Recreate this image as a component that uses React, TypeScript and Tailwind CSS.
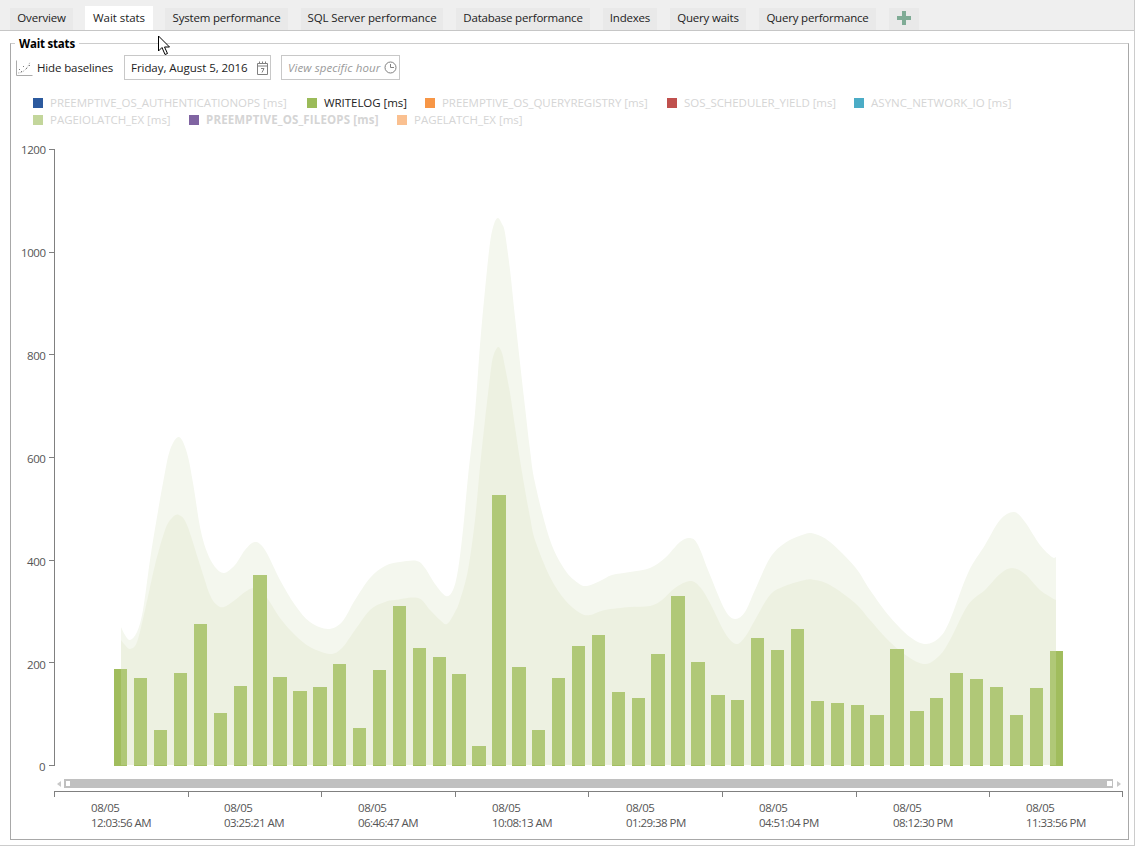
import React from "react";

type P = [number, number];

const outer: P[] = [[121,627],[125,635],[130,640],[137,632],[143,610],[150,560],[157,517],[163,483],[170,450],[179,437],[187,453],[193,483],[200,527],[207,552],[215,567],[224,573],[235,565],[245,550],[255,542],[265,550],[280,580],[295,605],[310,622],[328,629],[342,622],[355,600],[370,578],[385,566],[400,562],[417,561],[425,568],[435,584],[446,596],[453,590],[458,570],[463,530],[468,477],[475,413],[480,345],[485,290],[490,243],[494,224],[498,218],[502,224],[505,233],[510,270],[515,317],[520,363],[525,407],[530,450],[535,483],[550,540],[565,570],[578,583],[587,586],[600,581],[612,575],[630,572],[650,568],[665,558],[680,542],[690,538],[698,545],[710,575],[725,610],[735,619],[745,612],[755,590],[770,558],[785,543],[805,534],[815,534],[830,542],[855,567],[870,590],[890,617],[910,637],[926,644],[940,637],[950,620],[968,573],[985,545],[1000,520],[1014,512],[1025,522],[1040,545],[1052,557],[1056,557]];
const inner: P[] = [[121,640],[125,645],[130,649],[137,642],[145,610],[155,565],[165,530],[172,518],[179,515],[187,525],[200,565],[210,595],[217,605],[224,607],[235,600],[245,592],[254,588],[265,595],[280,618],[295,635],[310,647],[330,654],[342,648],[355,630],[370,610],[385,602],[395,600],[418,598],[430,610],[440,620],[447,624],[455,612],[460,600],[468,570],[475,520],[480,467],[485,420],[490,377],[493,357],[498,347],[502,353],[505,367],[510,393],[515,427],[520,460],[525,490],[530,517],[535,540],[550,577],[565,600],[580,613],[590,615],[605,610],[630,607],[650,606],[662,600],[675,588],[690,581],[700,587],[710,603],[725,633],[736,644],[745,637],[755,620],[770,595],[785,586],[805,580],[815,580],[830,585],[855,603],[870,620],[890,642],[910,658],[926,664],[940,655],[950,640],[968,605],[985,590],[1000,574],[1012,568],[1025,574],[1040,590],[1052,598],[1056,600]];

function areaPath(pts: P[]): string {
  let d = `M${pts[0][0]} 765 L${pts[0][0]} ${pts[0][1]}`;
  for (let i = 0; i < pts.length - 1; i++) {
    const p0 = pts[Math.max(0, i - 1)];
    const p1 = pts[i];
    const p2 = pts[i + 1];
    const p3 = pts[Math.min(pts.length - 1, i + 2)];
    const c1x = p1[0] + (p2[0] - p0[0]) / 6;
    const c1y = p1[1] + (p2[1] - p0[1]) / 6;
    const c2x = p2[0] - (p3[0] - p1[0]) / 6;
    const c2y = p2[1] - (p3[1] - p1[1]) / 6;
    d += ` C${c1x.toFixed(1)} ${c1y.toFixed(1)} ${c2x.toFixed(1)} ${c2y.toFixed(1)} ${p2[0]} ${p2[1]}`;
  }
  return d + ` L${pts[pts.length - 1][0]} 765 Z`;
}

const bars: [number, number, number][] = [
  [114,13,669],[134,13,678],[154,13,730],[174,13,673],[194,13,624],[214,13,713],[234,13,686],[253,14,575],[273,14,677],[293,14,691],[313,14,687],[333,13,664],[353,13,728],[373,13,670],[393,13,606],[413,13,648],[433,13,657],[452,14,674],[472,14,746],[492,14,495],[512,14,667],[532,13,730],[552,13,678],[572,13,646],[592,13,635],[612,13,692],[632,13,698],[651,14,654],[671,14,596],[691,14,662],[711,14,695],[731,13,700],[751,13,638],[771,13,650],[791,13,629],[811,13,701],[831,13,703],[851,13,705],[870,14,715],[890,14,649],[910,14,711],[930,13,698],[950,13,673],[970,13,679],[990,13,687],[1010,13,715],[1030,13,688],[1050,13,651],
];

const yAxis: [string, number, number, number][] = [
  ["1200",21,154,149],["1000",21,257,252],["800",27,360,354],["600",27,463,457],["400",27,566,560],["200",27,669,662],["0",39,771,765],
];
const xTicks = [54,188,321,455,588,722,856,989,1122];
const xLabels: [number, string][] = [[91,"12:03:56 AM"],[224,"03:25:21 AM"],[358,"06:46:47 AM"],[492,"10:08:13 AM"],[626,"01:29:38 PM"],[759,"04:51:04 PM"],[893,"08:12:30 PM"],[1026,"11:33:56 PM"]];

const tabs: { label: string; cls: string }[] = [
  { label: "Overview", cls: "w-[63px] ml-[10px] tracking-[-0.2px]" },
  { label: "System performance", cls: "w-[123px] ml-[12px] tracking-[-0.2px]" },
  { label: "SQL Server performance", cls: "w-[142px] ml-[13px] tracking-[-0.1px]" },
  { label: "Database performance", cls: "w-[134px] ml-[13px] tracking-[-0.2px]" },
  { label: "Indexes", cls: "w-[54px] ml-[13px] tracking-[-0.2px]" },
  { label: "Query waits", cls: "w-[76px] ml-[13px] tracking-[-0.2px]" },
  { label: "Query performance", cls: "w-[117px] ml-[13px] tracking-[-0.2px]" },
];

const legendRow1: { label: string; swatch: string; text: string; w: string }[] = [
  { label: "PREEMPTIVE_OS_AUTHENTICATIONOPS [ms]", swatch: "bg-[#2c5a9e]", text: "text-[#d5d5d5] tracking-[-0.03px]", w: "w-[274px]" },
  { label: "WRITELOG [ms]", swatch: "bg-[#9bbb59]", text: "text-[#222222] tracking-[-0.05px]", w: "w-[118px]" },
  { label: "PREEMPTIVE_OS_QUERYREGISTRY [ms]", swatch: "bg-[#f79646]", text: "text-[#d5d5d5] tracking-[-0.05px]", w: "w-[242px]" },
  { label: "SOS_SCHEDULER_YIELD [ms]", swatch: "bg-[#c0504d]", text: "text-[#d5d5d5] tracking-[-0.05px]", w: "w-[187px]" },
  { label: "ASYNC_NETWORK_IO [ms]", swatch: "bg-[#4bacc6]", text: "text-[#d5d5d5] tracking-[0.03px]", w: "w-[170px]" },
];
const legendRow2: { label: string; swatch: string; text: string; w: string }[] = [
  { label: "PAGEIOLATCH_EX [ms]", swatch: "bg-[#c3d69b]", text: "text-[#d5d5d5] tracking-[-0.03px]", w: "w-[156px]" },
  { label: "PREEMPTIVE_OS_FILEOPS [ms]", swatch: "bg-[#8064a2]", text: "text-[#d5d5d5] font-bold tracking-[0.16px]", w: "w-[208px]" },
  { label: "PAGELATCH_EX [ms]", swatch: "bg-[#fac090]", text: "text-[#d5d5d5] tracking-[-0.03px]", w: "w-[150px]" },
];

function LegendRow({ items }: { items: typeof legendRow1 }) {
  return (
    <div className="flex h-[17px] items-center">
      {items.map((it) => (
        <div key={it.label} className={`flex items-center gap-[7px] ${it.w}`}>
          <span className={`h-[10px] w-[10px] shrink-0 ${it.swatch}`} />
          <span className={`whitespace-nowrap text-[11.5px] ${it.text}`}>{it.label}</span>
        </div>
      ))}
    </div>
  );
}

export default function App() {
  return (
    <div className="relative h-[846px] w-[1135px] overflow-hidden border-r border-b border-[#cccccc] bg-white font-['Open_Sans',sans-serif] text-[11.5px] text-[#222222]">
      <div className="flex h-[31px] items-end border-b border-[#c6c6c6] bg-[#efefef]">
        {tabs.slice(0, 1).map((t) => (
          <div key={t.label} className={`flex h-[22px] items-center justify-center bg-[#e9e9e9] pb-[2px] whitespace-nowrap ${t.cls}`}>{t.label}</div>
        ))}
        <div className="ml-[12px] flex h-[24px] w-[68px] items-center justify-center bg-white pb-[1px] tracking-[-0.05px] whitespace-nowrap">Wait stats</div>
        {tabs.slice(1).map((t) => (
          <div key={t.label} className={`flex h-[22px] items-center justify-center bg-[#e9e9e9] pb-[2px] whitespace-nowrap ${t.cls}`}>{t.label}</div>
        ))}
        <div className="ml-[13px] flex h-[22px] w-[30px] items-center justify-center bg-[#e9e9e9] pb-[2px]">
          <svg width="14" height="14" viewBox="0 0 14 14">
            <path d="M5 0h4v5h5v4H9v5H5V9H0V5h5z" fill="#7fab95" />
          </svg>
        </div>
      </div>

      <div className="relative mx-[10px] mt-[12px] h-[797px] w-[1119px] border border-[#a8a8a8] border-t-[#cccccc] pt-[11px]">
        <div className="absolute top-[-9px] left-[4px] bg-white px-[4px] text-[11.5px] leading-[17px] font-bold tracking-[-0.2px] text-black">Wait stats</div>

        <div className="flex h-[25px] items-center pl-[5px]">
          <svg width="17" height="16" viewBox="0 0 17 16" fill="none">
            <path d="M0.5 0.5V15.5H16.5" stroke="#ababab" />
            <path d="M2 13C6 13 11 10 14 2" stroke="#b8b8b8" strokeDasharray="1.5 1" />
            <path d="M3 9.5h1M7 6.5h1M5 11.5h1M10 8.5h1M13 5.5h1" stroke="#7c7c7c" />
          </svg>
          <span className="ml-[4px] w-[87px] whitespace-nowrap tracking-[-0.13px]">Hide baselines</span>
          <div className="flex h-[25px] w-[147px] items-center justify-between border border-[#c8c8c8] pr-[1px] pl-[6px] tracking-[-0.05px] whitespace-nowrap">
            <span>Friday, August 5, 2016</span>
            <svg width="13" height="14" viewBox="0 0 13 14" fill="none" stroke="#808080">
              <path d="M1.5 2.5H11.5V13.5H1.5ZM1.5 5H11.5M3.5 0.5V3M6.5 0.5V3M9.5 0.5V3M5 7.5H8L6 11.5" />
            </svg>
          </div>
          <div className="ml-[10px] flex h-[25px] w-[119px] items-center justify-between border border-[#c8c8c8] pr-[2px] pl-[6px] tracking-[0.1px] whitespace-nowrap text-[#9a9a9a] italic">
            <span>View specific hour</span>
            <svg width="13" height="13" viewBox="0 0 13 13" fill="none" stroke="#808080">
              <circle cx="6.5" cy="6.5" r="5.5" />
              <path d="M6.5 3V6.5H10" />
            </svg>
          </div>
        </div>

        <div className="mt-[14px] flex flex-col pl-[22px]">
          <LegendRow items={legendRow1} />
          <LegendRow items={legendRow2} />
        </div>

        <svg className="mt-[2px] block" width="1117" height="709" viewBox="11 130 1117 709">
          <path d={areaPath(outer)} fill="#f4f7ee" />
          <path d={areaPath(inner)} fill="#edf1e1" />
          {bars.map(([x, w, y]) => (
            <g key={x}>
              <rect x={x} y={y} width={w} height={765 - y} fill="#b0c877" />
              <rect x={x} y={765} width={w} height={1} fill="#a3bf62" />
            </g>
          ))}
          <rect x="114" y="669" width="7" height="97" fill="#a1bd5d" />
          <rect x="1056" y="651" width="7" height="115" fill="#a1bd5d" />

          <path d="M54.5 149V766" stroke="#808080" />
          {yAxis.map(([l, x, base, tick]) => (
            <g key={l}>
              <path d={`M49 ${tick + 0.5}H54`} stroke="#808080" />
              <text x={x} y={base} fontSize="11.5" fill="#555555" letterSpacing="-0.4">{l}</text>
            </g>
          ))}

          <path d="M61 781V787L57 784Z" fill="#c8c8c8" />
          <rect x="64" y="779" width="1049" height="9" fill="#c0c0c0" />
          <rect x="66" y="781" width="4" height="5" fill="#ffffff" />
          <rect x="1107" y="781" width="5" height="5" fill="#ffffff" />
          <path d="M1117 781V787L1121 784Z" fill="#c8c8c8" />

          <path d="M54 791.5H1122.5" stroke="#808080" />
          {xTicks.map((x) => (
            <path key={x} d={`M${x + 0.5} 791V797`} stroke="#808080" />
          ))}
          {xLabels.map(([x, l]) => (
            <g key={x} fontSize="11.5" fill="#555555">
              <text x={x} y="812" letterSpacing="-0.4">08/05</text>
              <text x={x} y="827" letterSpacing="-0.55">{l}</text>
            </g>
          ))}
        </svg>
      </div>

      <svg className="absolute top-[35px] left-[157px]" width="14" height="21" viewBox="0 0 14 21">
        <path d="M1.5 1V16L5 12.5L8 19.5L10.5 18.5L7.5 12H12.5Z" fill="#ffffff" stroke="#000000" />
      </svg>
    </div>
  );
}
